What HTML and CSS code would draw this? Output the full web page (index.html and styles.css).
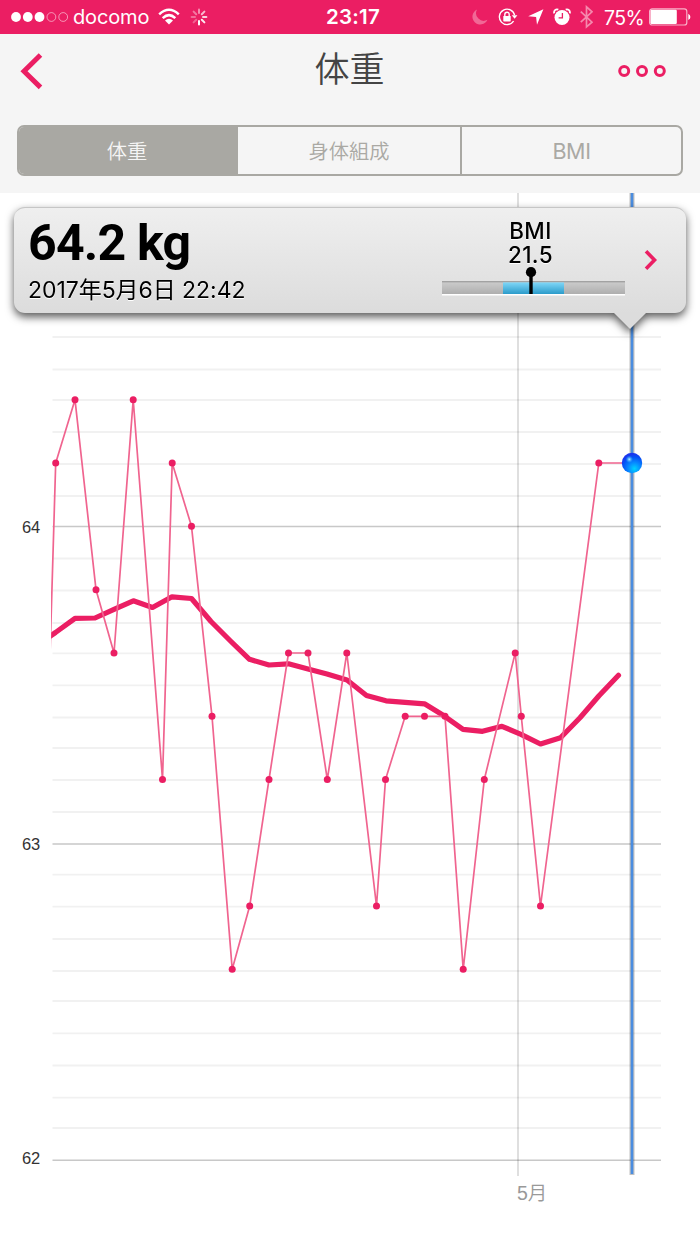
FILE: index.html
```
<!DOCTYPE html>
<html lang="ja">
<head>
  <meta charset="utf-8">
  <title>体重</title>
  <meta name="viewport" content="width=device-width, initial-scale=1">
  <link rel="stylesheet" href="styles.css">
</head>
<body>
  <div class="status-bar">
    <div class="status-left">
      <svg class="signal" width="58" height="12" viewBox="0 0 58 12">
        <g fill="#fff"><circle cx="5" cy="6" r="4.9"/><circle cx="16.8" cy="6" r="4.9"/><circle cx="28.5" cy="6" r="4.9"/></g>
        <g fill="none" stroke="#fff" stroke-opacity=".65" stroke-width=".8"><circle cx="40.4" cy="6" r="4.4"/><circle cx="52.2" cy="6" r="4.4"/></g>
      </svg>
      <span class="carrier">docomo</span>
      <svg class="wifi" width="22" height="18" viewBox="0 0 22 18">
        <g fill="none" stroke="#fff" stroke-width="2.5">
          <path d="M1.2 6.4Q11 -2.8 20.8 6.4"/>
          <path d="M4.7 10.1Q11 4.2 17.3 10.1"/>
        </g>
        <path d="M7 12.5Q11 8.9 15 12.5L11 16.5Z" fill="#fff"/>
      </svg>
      <svg class="spinner" width="18" height="18" viewBox="-9 -9 18 18">
        <g stroke="#fff" stroke-width="2" stroke-linecap="round">
          <path d="M0 -4V-7.4" opacity=".5"/>
          <path d="M2.8 -2.8L5.4 -5.4" opacity=".7"/>
          <path d="M4 0H7.4" opacity=".8"/>
          <path d="M2.8 2.8L5.4 5.4" opacity=".9"/>
          <path d="M0 4V7.4"/>
          <path d="M-2.8 2.8L-5.4 5.4" opacity=".3"/>
          <path d="M-4 0H-7.4" opacity=".35"/>
          <path d="M-2.8 -2.8L-5.4 -5.4" opacity=".4"/>
        </g>
      </svg>
    </div>
    <span class="clock">23:17</span>
    <div class="status-right">
      <svg class="moon" width="16" height="16" viewBox="0 0 16 16">
        <path d="M5 .6A7.8 7.8 0 1 0 15.4 10.8A7.6 7.6 0 0 1 5 .6Z" fill="#fff" opacity=".33"/>
      </svg>
      <svg class="lock" width="20" height="18" viewBox="0 0 20 18">
        <path d="M16.6 7.2A7.7 7.7 0 1 0 15.6 13" fill="none" stroke="#fff" stroke-width="1.4"/>
        <path d="M13.8 7.2H19.4L16.6 10.8Z" fill="#fff"/>
        <rect x="5.3" y="8" width="7.4" height="5.4" rx=".6" fill="#fff"/>
        <path d="M6.8 8.4V6.4a2.2 2.2 0 0 1 4.4 0V8.4" fill="none" stroke="#fff" stroke-width="1.4"/>
      </svg>
      <svg class="location" width="16" height="16" viewBox="0 0 16 16">
        <path d="M15.4 .3L.2 7.3L8.1 7.9L9 15.7Z" fill="#fff"/>
      </svg>
      <svg class="alarm" width="18" height="18" viewBox="0 0 18 18">
        <circle cx="9" cy="9.5" r="7.5" fill="#fff"/>
        <path d="M1.3 5.4A3 3 0 0 1 5.3 1.6M12.7 1.6A3 3 0 0 1 16.7 5.4" fill="none" stroke="#fff" stroke-width="1.8"/>
        <path d="M9.4 5V9.8H5.6" fill="none" stroke="#eb1e63" stroke-width="1.3"/>
      </svg>
      <svg class="bluetooth" width="13" height="24" viewBox="0 0 13 24">
        <path d="M.8 6.6L12 17.2L6.5 22V1.8L12 6.8L.8 17.2" fill="none" stroke="#fff" stroke-opacity=".48" stroke-width="1.7"/>
      </svg>
      <span class="percent">75%</span>
      <svg class="battery" width="42" height="18" viewBox="0 0 42 18">
        <rect x=".6" y=".8" width="37.2" height="16.2" rx="2.6" fill="none" stroke="#fff" stroke-opacity=".65" stroke-width="1.2"/>
        <rect x="1.4" y="1.8" width="26.4" height="14.2" rx="1.2" fill="#fff"/>
        <path d="M39.3 5.8Q41.4 7 41.4 8.9T39.3 12Z" fill="#fff"/>
      </svg>
    </div>
  </div>

  <header class="header">
    <svg class="back" width="24" height="38" viewBox="0 0 24 38">
      <path d="M20.5 3L4 19.2L20.5 35.4" fill="none" stroke="#eb1e63" stroke-width="5"/>
    </svg>
    <h1>体重</h1>
    <svg class="more" width="48" height="14" viewBox="0 0 48 14">
      <g fill="none" stroke="#eb1e63" stroke-width="3"><circle cx="6.2" cy="7" r="4.5"/><circle cx="24" cy="7" r="4.5"/><circle cx="41.8" cy="7" r="4.5"/></g>
    </svg>
  </header>

  <nav class="tabs-wrap">
    <div class="tabs">
      <a class="tab active">体重</a>
      <a class="tab">身体組成</a>
      <a class="tab latin">BMI</a>
    </div>
  </nav>

  <main class="chart-area">
    <svg class="chart" width="700" height="1051" viewBox="0 193 700 1051">
      <defs>
        <clipPath id="plot"><rect x="51" y="193" width="649" height="1000"/></clipPath>
        <radialGradient id="ball" cx=".62" cy=".78" r=".72">
          <stop offset="0" stop-color="#00d2ff"/>
          <stop offset=".45" stop-color="#0784ff"/>
          <stop offset=".8" stop-color="#0451f5"/>
          <stop offset="1" stop-color="#1a36ee"/>
        </radialGradient>
        <radialGradient id="shine">
          <stop offset="0" stop-color="#b8f6ff"/>
          <stop offset="1" stop-color="#22a8ff" stop-opacity="0"/>
        </radialGradient>
      </defs>

      <!-- 0.1kg lines -->
      <path class="grid-minor" d="M52.5 337H661M52.5 369.5H661M52.5 400H661M52.5 432H661M52.5 464H661M52.5 496H661M52.5 558.5H661M52.5 590.5H661M52.5 623H661M52.5 653.3H661M52.5 685.3H661M52.5 717.5H661M52.5 748H661M52.5 780H661M52.5 812H661M52.5 874.6H661M52.5 906.6H661M52.5 939H661M52.5 971H661M52.5 1001H661M52.5 1033.3H661M52.5 1065.5H661M52.5 1097.6H661M52.5 1128H661"/>
      <!-- 1kg lines -->
      <path class="grid-major" d="M52.5 526.5H661M52.5 844H661M52.5 1160.3H661"/>
      <path class="month-line" d="M518 193V1176"/>

      <g class="y-labels">
        <text x="40.3" y="533">64</text>
        <text x="40.3" y="849.5">63</text>
        <text x="40.3" y="1164.4">62</text>
      </g>
      <text class="x-label" x="517" y="1200">5月</text>

      <g clip-path="url(#plot)">
        <polyline class="trend" points="46,639 55.5,632.5 75,618.3 95,618 114,609.3 133.3,600.8 152.5,607.5 172,596.8 191.5,598.5 211,621.5 231,641.5 249.5,659.3 269,665 288.5,663.8 308,669 327,674 347,680 366.5,695.5 386,700.8 405,702.3 424.5,703.8 444,715.8 463,729.3 482.5,731.3 502,726.3 521,734.3 540.5,744 560.5,737.8 580,717.8 599,695.8 618.5,675.3"/>
        <polyline class="weight" points="50,655 55.7,463 75,399.7 96,589.7 114,653 133.2,399.7 162.5,779.5 172.2,463 191.5,526.3 212,716.3 232.2,969.3 249.7,906 269,779.5 288.5,653 308,653 327.3,779.5 346.8,653 376.5,906 385.5,779.5 405.2,716.3 424.5,716.3 445,716.3 463.2,969.3 484.3,779.5 515.2,653 521.3,716.3 540.5,906 598.8,463 632,463"/>
      </g>

      <g class="points">
        <circle cx="55.7" cy="463" r="3.5"/><circle cx="75" cy="399.7" r="3.5"/><circle cx="96" cy="589.7" r="3.5"/>
        <circle cx="114" cy="653" r="3.5"/><circle cx="133.2" cy="399.7" r="3.5"/><circle cx="162.5" cy="779.5" r="3.5"/>
        <circle cx="172.2" cy="463" r="3.5"/><circle cx="191.5" cy="526.3" r="3.5"/><circle cx="212" cy="716.3" r="3.5"/>
        <circle cx="232.2" cy="969.3" r="3.5"/><circle cx="249.7" cy="906" r="3.5"/><circle cx="269" cy="779.5" r="3.5"/>
        <circle cx="288.5" cy="653" r="3.5"/><circle cx="308" cy="653" r="3.5"/><circle cx="327.3" cy="779.5" r="3.5"/>
        <circle cx="346.8" cy="653" r="3.5"/><circle cx="376.5" cy="906" r="3.5"/><circle cx="385.5" cy="779.5" r="3.5"/>
        <circle cx="405.2" cy="716.3" r="3.5"/><circle cx="424.5" cy="716.3" r="3.5"/><circle cx="445" cy="716.3" r="3.5"/>
        <circle cx="463.2" cy="969.3" r="3.5"/><circle cx="484.3" cy="779.5" r="3.5"/><circle cx="515.2" cy="653" r="3.5"/>
        <circle cx="521.3" cy="716.3" r="3.5"/><circle cx="540.5" cy="906" r="3.5"/><circle cx="598.8" cy="463" r="3.5"/>
      </g>

      <!-- cursor -->
      <path d="M632 193V1175" stroke="#000" stroke-opacity=".12" stroke-width="6"/>
      <path d="M632 193V1175" stroke="#000" stroke-opacity=".14" stroke-width="4"/>
      <path d="M632 193V1174" stroke="#4a8de0" stroke-width="2.6"/>
      <circle cx="632" cy="463" r="10.2" fill="url(#ball)"/>
      <circle cx="629.3" cy="459.3" r="3.8" fill="url(#shine)"/>
    </svg>

    <section class="callout">
      <div class="reading">
        <div class="value">64.2 kg</div>
        <div class="date">2017年5月6日 22:42</div>
      </div>
      <div class="bmi">
        <span>BMI</span>
        <span>21.5</span>
        <svg class="bmi-bar" width="183" height="30" viewBox="0 0 183 30">
          <defs>
            <linearGradient id="gray" x2="0" y2="1"><stop offset="0" stop-color="#cecece"/><stop offset="1" stop-color="#aeaeae"/></linearGradient>
            <linearGradient id="blue" x2="0" y2="1"><stop offset="0" stop-color="#80d7f8"/><stop offset="1" stop-color="#2b9bca"/></linearGradient>
          </defs>
          <rect y="14" width="183" height="13" fill="url(#gray)"/>
          <rect y="14" width="183" height="1.4" fill="#a2a2a2"/>
          <rect y="27" width="183" height="1.5" fill="#fff"/>
          <rect x="61" y="15.4" width="61" height="11.6" fill="url(#blue)"/>
          <path d="M89 5V27" stroke="#000" stroke-width="3.4"/>
          <circle cx="89" cy="5.2" r="5.1"/>
        </svg>
      </div>
      <svg class="go" width="14" height="22" viewBox="0 0 14 22">
        <path d="M2 2.3L10.5 11L2 19.7" fill="none" stroke="#eb1e63" stroke-width="3.6"/>
      </svg>
    </section>
  </main>
</body>
</html>
```

FILE: styles.css
```
* {
  box-sizing: border-box;
}
body {
  margin: 0;
  width: 700px;
  height: 1244px;
  overflow: hidden;
  background: #fff;
  font-family: Inter, "Noto Sans CJK JP", sans-serif;
}
svg {
  display: block;
  flex: none;
}
.status-bar {
  display: grid;
  grid-template-columns: 1fr auto 1fr;
  align-items: center;
  height: 34px;
  padding: 0 9px 0 11px;
  background: #eb1e63;
  color: #fff;
}
.status-left, .status-right {
  display: flex;
  align-items: center;
}
.status-right {
  justify-content: flex-end;
}
.carrier {
  margin: 0 9px 0 4px;
  font-size: 20px;
  letter-spacing: -0.15px;
  line-height: 34px;
}
.spinner {
  margin-left: 10px;
}
.clock {
  margin-left: 4px;
  font-size: 20.5px;
  font-weight: 600;
  letter-spacing: 0.2px;
  line-height: 34px;
}
.lock {
  margin-left: 10px;
}
.location {
  margin-left: 10px;
}
.alarm {
  margin-left: 9px;
}
.bluetooth {
  margin-left: 9px;
}
.percent {
  margin: 0 5px 0 11px;
  padding-top: 1px;
  font-size: 19.5px;
  letter-spacing: -0.6px;
}
.header {
  display: flex;
  align-items: center;
  justify-content: space-between;
  height: 74px;
  padding: 0 34px 0 20px;
  background: #f5f5f5;
}
.header h1 {
  margin: 0 0 9px 37px;
  color: #444;
  font-size: 35px;
  font-weight: 350;
}
.tabs-wrap {
  height: 85px;
  padding: 17px 17px 0;
  background: #f5f5f5;
}
.tabs {
  display: grid;
  grid-template-columns: 219px 222px 1fr;
  height: 51px;
  border: 2px solid #a9a8a3;
  border-radius: 7px;
  overflow: hidden;
}
.tab {
  display: flex;
  align-items: center;
  justify-content: center;
  padding-bottom: 2px;
  color: #aaa9a4;
  font-size: 20.3px;
  font-weight: 350;
}
.tab.latin {
  padding: 0;
  font-size: 21.5px;
  font-weight: 400;
  letter-spacing: -0.4px;
  border-left: 2px solid #a9a8a3;
}
.tab.active {
  padding-right: 3px;
  background: #a9a8a3;
  color: #f5f5f5;
}
.chart-area {
  position: relative;
  height: 1051px;
}
.grid-minor {
  stroke: #f1f1f1;
  stroke-width: 1.8;
}
.grid-major {
  stroke: #c8c8c8;
  stroke-width: 1.6;
}
.month-line {
  stroke: #000;
  stroke-opacity: 0.16;
  stroke-width: 1.6;
}
.y-labels {
  fill: #333;
  font-family: "Liberation Sans", Arial, sans-serif;
  font-size: 16.5px;
  text-anchor: end;
}
.x-label {
  fill: #999;
  font-family: "Liberation Sans", "Noto Sans CJK JP", sans-serif;
  font-size: 19.5px;
  font-weight: 350;
}
.trend {
  fill: none;
  stroke: #eb1e63;
  stroke-width: 5.2;
  stroke-linecap: round;
  stroke-linejoin: round;
}
.weight {
  fill: none;
  stroke: #f0648f;
  stroke-width: 1.7;
  stroke-linejoin: round;
}
.points {
  fill: #eb1e63;
}
.callout {
  position: absolute;
  left: 14px;
  top: 14px;
  display: flex;
  width: 672px;
  height: 106px;
  padding: 0 28px 0 14px;
  border-top: 1px solid #c6c6c6;
  border-radius: 11px;
  background: linear-gradient(#efefef, #dcdcdc);
  color: #000;
  filter: drop-shadow(0 4px 4px rgba(0, 0, 0, 0.65));
}
.callout::after {
  content: "";
  position: absolute;
  left: 599px;
  top: 104px;
  width: 34px;
  height: 17px;
  background: #dcdcdc;
  clip-path: polygon(0 0, 100% 0, 50% 100%);
}
.reading {
  flex: 1;
  padding-top: 7px;
  white-space: nowrap;
}
.value {
  font-family: Roboto, sans-serif;
  font-size: 50px;
  font-weight: 700;
  letter-spacing: -0.8px;
  line-height: 56px;
}
.date {
  margin-top: 4px;
  font-size: 23px;
  letter-spacing: -0.05px;
  line-height: 30px;
  text-shadow: 0 1px 0 #fff;
}
.bmi {
  display: flex;
  flex-direction: column;
  align-items: center;
  width: 183px;
  padding-top: 11px;
  font-size: 22.4px;
  font-weight: 500;
  letter-spacing: 0.4px;
  line-height: 24px;
  text-shadow: 0 1px 0 #fff;
}
.bmi span {
  margin-right: 6px;
}
.go {
  margin: 41px 0 0 19px;
}
```
